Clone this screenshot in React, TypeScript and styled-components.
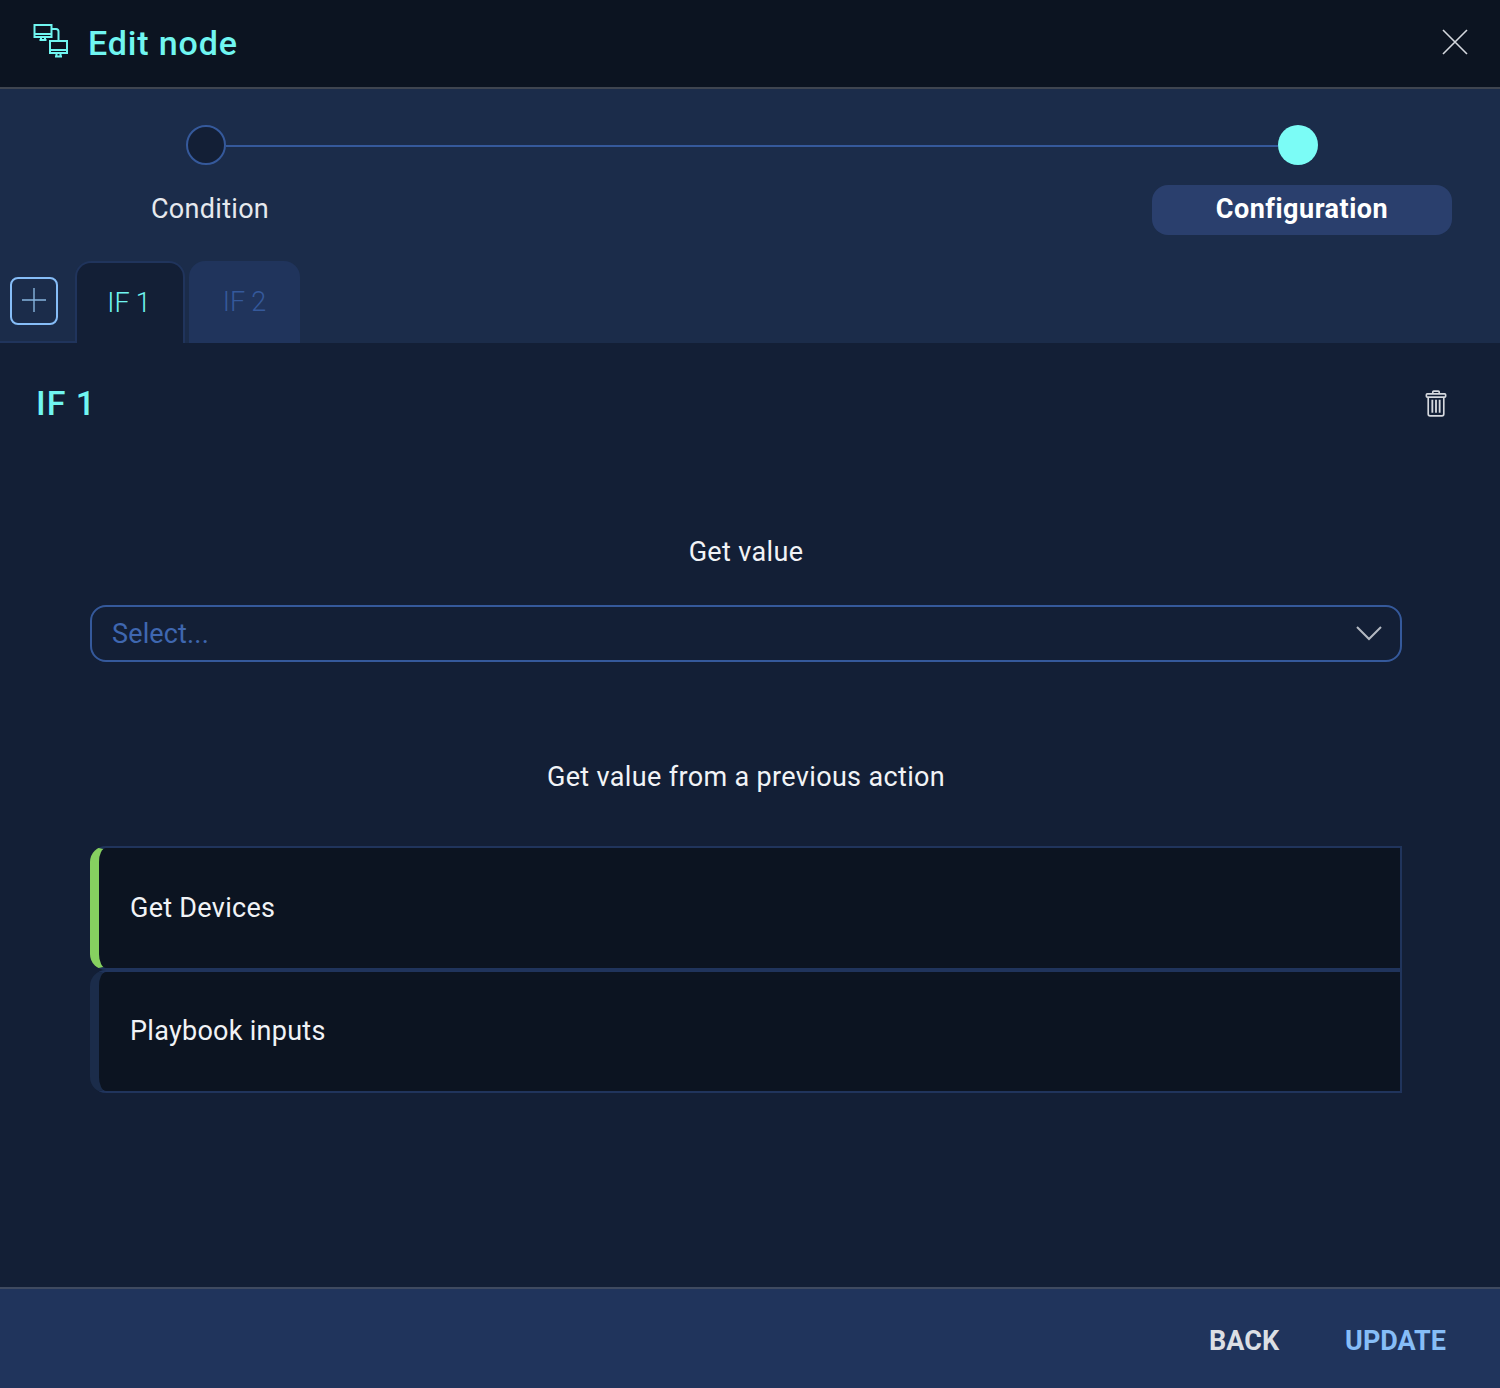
import React from 'react';
import styled, { createGlobalStyle } from 'styled-components';

const GlobalStyle = createGlobalStyle`
  html, body {
    margin: 0;
    padding: 0;
    background: #131f36;
    font-family: Roboto, "Liberation Sans", sans-serif;
  }
  * {
    box-sizing: border-box;
  }
`;

const Page = styled.div`
  width: 1500px;
  height: 1388px;
  display: flex;
  flex-direction: column;
  overflow: hidden;
`;

const Header = styled.header`
  height: 89px;
  flex: none;
  display: flex;
  align-items: center;
  padding: 0 31px 4px 33px;
  background: #0c1421;
  border-bottom: 2px solid #3f4550;
`;

const Title = styled.h1`
  margin: 2px 0 0 19px;
  flex: 1;
  font-size: 34px;
  line-height: 40px;
  font-weight: 500;
  letter-spacing: 0.85px;
  color: #70f6f1;
`;

const Steps = styled.section`
  height: 254px;
  flex: none;
  display: flex;
  flex-direction: column;
  background: #1b2c4a;
`;

const Track = styled.div`
  display: flex;
  align-items: center;
  margin-top: 36px;
  padding: 0 182px 0 186px;
`;

const Dot = styled.span<{ $active?: boolean }>`
  width: 40px;
  height: 40px;
  flex: none;
  border-radius: 50%;
  background: ${(p) => (p.$active ? '#7bfcf6' : '#131f36')};
  border: ${(p) => (p.$active ? 'none' : '2px solid #35599b')};
`;

const Connector = styled.span`
  flex: 1;
  height: 2px;
  margin-top: 2px;
  background: #35599b;
`;

const StepLabels = styled.div`
  display: flex;
  justify-content: space-between;
  margin-top: 20px;
  padding: 0 48px 0 60px;
`;

const StepLabel = styled.div<{ $active?: boolean }>`
  width: 300px;
  height: 50px;
  display: flex;
  align-items: center;
  justify-content: center;
  padding-bottom: 3px;
  border-radius: 16px;
  font-size: 27px;
  letter-spacing: ${(p) => (p.$active ? '0.5px' : '0.3px')};
  font-weight: ${(p) => (p.$active ? 700 : 400)};
  color: ${(p) => (p.$active ? '#ffffff' : '#e6e9ee')};
  background: ${(p) => (p.$active ? '#2a3f6d' : 'transparent')};
`;

const TabRow = styled.div`
  height: 82px;
  margin-top: 26px;
  display: flex;
  align-items: flex-end;
`;

const AddCell = styled.div`
  width: 75px;
  height: 100%;
  flex: none;
  padding: 16px 0 0 10px;
  border-bottom: 2px solid #20345c;
`;

const AddButton = styled.button`
  width: 48px;
  height: 48px;
  padding: 0 0 2px;
  display: flex;
  align-items: center;
  justify-content: center;
  background: transparent;
  border: 2px solid #86bdf7;
  border-radius: 8px;
`;

const Tab = styled.div<{ $active?: boolean }>`
  width: ${(p) => (p.$active ? '110px' : '111px')};
  height: 82px;
  margin-right: 4px;
  display: flex;
  align-items: center;
  justify-content: center;
  padding-right: ${(p) => (p.$active ? '2px' : '0')};
  font-size: 27px;
  font-weight: 300;
  letter-spacing: -0.15px;
  border-radius: 16px 16px 0 0;
  color: ${(p) => (p.$active ? '#70f6f1' : '#35599b')};
  background: ${(p) => (p.$active ? '#131f36' : '#20345c')};
  border: ${(p) => (p.$active ? '2px solid #20345c' : 'none')};
  border-bottom: none;
`;

const Body = styled.main`
  flex: 1;
  display: flex;
  flex-direction: column;
  background: #131f36;
`;

const BodyHead = styled.div`
  height: 120px;
  flex: none;
  display: flex;
  align-items: center;
  justify-content: space-between;
  padding: 0 53px 0 36px;
`;

const SectionTitle = styled.h2`
  margin: 0;
  font-size: 34px;
  font-weight: 500;
  letter-spacing: 1px;
  color: #70f6f1;
`;

const Form = styled.div`
  display: flex;
  flex-direction: column;
  width: 1312px;
  margin-left: 90px;
  padding-top: 74px;
`;

const FieldLabel = styled.div`
  height: 32px;
  line-height: 30px;
  text-align: center;
  font-size: 27px;
  letter-spacing: 0.35px;
  color: #f1f3f6;
`;

const SelectBox = styled.div`
  height: 57px;
  margin: 36px 0 100px;
  display: flex;
  align-items: center;
  justify-content: space-between;
  padding: 0 18px 0 20px;
  border: 2px solid #35599b;
  border-radius: 16px;
  font-size: 27px;
  letter-spacing: 0.15px;
  color: #3f67b0;
`;

const ActionList = styled.div`
  margin-top: 52px;
  display: flex;
  flex-direction: column;
`;

const ActionItem = styled.div<{ $accent: string }>`
  height: 123.5px;
  display: flex;
  align-items: center;
  padding-left: 31px;
  background: #0c1421;
  border-style: solid;
  border-color: #20345c;
  border-width: 2px 2px 2px 9px;
  border-left-color: ${(p) => p.$accent};
  border-radius: 16px 0 0 16px;
  font-size: 27px;
  letter-spacing: 0.28px;
  color: #f1f3f6;
`;

const Footer = styled.footer`
  height: 101px;
  flex: none;
  display: flex;
  align-items: center;
  justify-content: flex-end;
  gap: 66px;
  padding: 4px 54px 0 0;
  background: #20345c;
  border-top: 2px solid #3f4a60;
`;

const FooterButton = styled.button<{ $primary?: boolean }>`
  padding: 0;
  background: none;
  border: none;
  font-family: inherit;
  font-size: 27px;
  font-weight: 700;
  color: ${(p) => (p.$primary ? '#86bdf7' : '#dcdfe4')};
`;

const IconButton = styled.button`
  padding: 0;
  display: flex;
  background: none;
  border: none;
`;

const NodesIcon = () => (
  <svg width="36" height="36" viewBox="0 0 36 36" fill="none" stroke="#70f6f1" strokeWidth="2">
    <rect x="1.5" y="1" width="17" height="12" />
    <path d="M1.5 10h17M8 13v2.5M12 13v2.5M6.5 16h7" />
    <rect x="17" y="17" width="17" height="12" />
    <path d="M17 26h17M23.5 29v2.5M27.5 29v2.5M22 32.5h7" />
    <path d="M18.5 5h4.5a2.5 2.5 0 0 1 2.5 2.5V17" />
  </svg>
);

const CloseIcon = () => (
  <svg width="28" height="28" viewBox="0 0 28 28" stroke="#d5d8de" strokeWidth="1.6" fill="none">
    <path d="M2 2l24 24M26 2L2 26" />
  </svg>
);

const PlusIcon = () => (
  <svg width="26" height="26" viewBox="0 0 26 26" stroke="#86b4de" strokeWidth="1.4" fill="none">
    <path d="M13 1v24M1 13h24" />
  </svg>
);

const TrashIcon = () => (
  <svg width="22" height="29" viewBox="0 0 24 30" fill="none" stroke="#d5d8de" strokeWidth="1.8">
    <path d="M8.5 4.5V2.5a1 1 0 0 1 1-1h5a1 1 0 0 1 1 1v2" />
    <rect x="1.5" y="4.5" width="21" height="3.5" rx="1" />
    <path d="M3.5 8v18.5a2 2 0 0 0 2 2h13a2 2 0 0 0 2-2V8" />
    <path d="M8 11v14M12 11v14M16 11v14" strokeWidth="2" />
  </svg>
);

const ChevronIcon = () => (
  <svg width="26" height="15" viewBox="0 0 26 15" fill="none" stroke="#b4b9c2" strokeWidth="2">
    <path d="M1 1l12 12L25 1" />
  </svg>
);

const App = () => (
  <Page>
    <GlobalStyle />
    <Header>
      <NodesIcon />
      <Title>Edit node</Title>
      <IconButton>
        <CloseIcon />
      </IconButton>
    </Header>
    <Steps>
      <Track>
        <Dot />
        <Connector />
        <Dot $active />
      </Track>
      <StepLabels>
        <StepLabel>Condition</StepLabel>
        <StepLabel $active>Configuration</StepLabel>
      </StepLabels>
      <TabRow>
        <AddCell>
          <AddButton>
            <PlusIcon />
          </AddButton>
        </AddCell>
        <Tab $active>IF 1</Tab>
        <Tab>IF 2</Tab>
      </TabRow>
    </Steps>
    <Body>
      <BodyHead>
        <SectionTitle>IF 1</SectionTitle>
        <IconButton>
          <TrashIcon />
        </IconButton>
      </BodyHead>
      <Form>
        <FieldLabel>Get value</FieldLabel>
        <SelectBox>
          Select...
          <ChevronIcon />
        </SelectBox>
        <FieldLabel>Get value from a previous action</FieldLabel>
        <ActionList>
          <ActionItem $accent="#86d060">Get Devices</ActionItem>
          <ActionItem $accent="#1b2c4a">Playbook inputs</ActionItem>
        </ActionList>
      </Form>
    </Body>
    <Footer>
      <FooterButton>BACK</FooterButton>
      <FooterButton $primary>UPDATE</FooterButton>
    </Footer>
  </Page>
);

export default App;
